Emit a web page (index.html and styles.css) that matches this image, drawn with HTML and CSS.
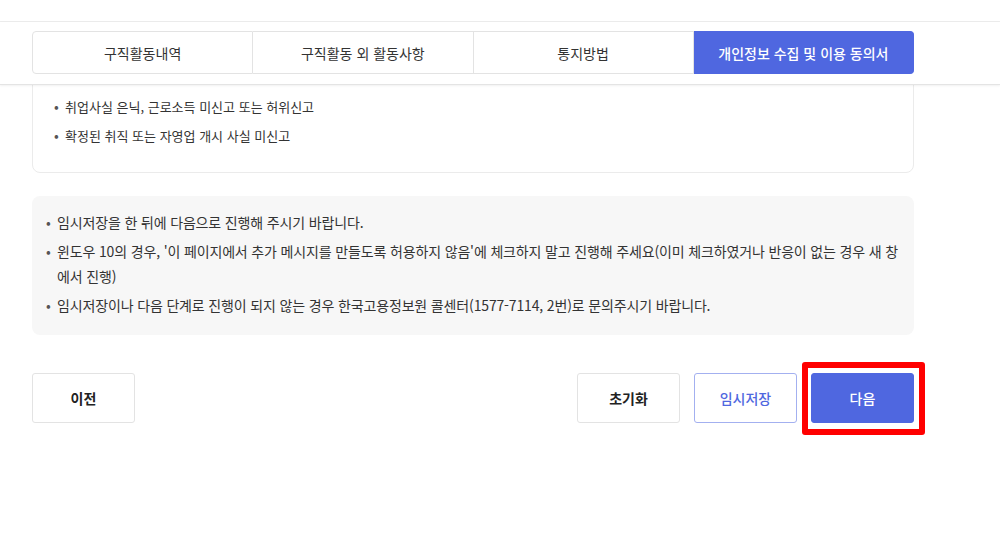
FILE: index.html
```html
<!DOCTYPE html>
<html lang="ko">
<head>
    <meta charset="utf-8">
    <link rel="stylesheet" href="styles.css">
</head>
<body>
    <div class="topbar"></div>
    <nav class="tabbar">
        <ul class="tabs">
            <li class="tab">구직활동내역</li>
            <li class="tab">구직활동 외 활동사항</li>
            <li class="tab">통지방법</li>
            <li class="tab active">개인정보 수집 및 이용 동의서</li>
        </ul>
    </nav>

    <main class="content">
        <div class="card">
            <ul class="dot-list">
                <li>실업인정 허위 신청</li>
                <li>취업사실 은닉, 근로소득 미신고 또는 허위신고</li>
                <li>확정된 취직 또는 자영업 개시 사실 미신고</li>
            </ul>
        </div>

        <div class="notice">
            <ul class="dot-list">
                <li>임시저장을 한 뒤에 다음으로 진행해 주시기 바랍니다.</li>
                <li>윈도우 10의 경우, '이 페이지에서 추가 메시지를 만들도록 허용하지 않음'에 체크하지 말고 진행해 주세요(이미 체크하였거나 반응이 없는 경우 새 창 에서 진행)</li>
                <li>임시저장이나 다음 단계로 진행이 되지 않는 경우 한국고용정보원 콜센터(1577-7114, 2번)로 문의주시기 바랍니다.</li>
            </ul>
        </div>

        <div class="actions">
            <button class="btn">이전</button>
            <div class="actions-right">
                <button class="btn">초기화</button>
                <button class="btn btn-line">임시저장</button>
                <div class="next-wrap">
                    <button class="btn btn-primary">다음</button>
                    <span class="highlight"></span>
                </div>
            </div>
        </div>
    </main>
</body>
</html>
```

FILE: styles.css
```css
html, body {
    min-height: 100%;
}
body {
    margin: 0;
    padding-bottom: 110px;
    background: #fff;
    font-family: "Noto Sans CJK KR", "Noto Sans", sans-serif;
    color: #333;
    font-size: 13px;
}
ul {
    margin: 0;
    padding: 0;
    list-style: none;
}

.topbar {
    height: 21px;
    border-bottom: 1px solid #ececec;
}
.tabbar {
    position: relative;
    z-index: 2;
    background: #fff;
    padding: 9px 0 10px 32px;
    border-bottom: 1px solid #e4e4e4;
    box-shadow: 0 1px 2px rgba(0, 0, 0, 0.06);
}
.tabs {
    display: flex;
    width: 882px;
    height: 43px;
}
.tab {
    flex: 1;
    display: flex;
    align-items: center;
    justify-content: center;
    font-size: 14px;
    color: #333;
    border: 1px solid #e3e3e3;
    border-left: none;
}
.tab:first-child {
    border-left: 1px solid #e3e3e3;
    border-radius: 4px 0 0 4px;
}
.tab.active {
    background: #4f67e0;
    border-color: #4f67e0;
    color: #fff;
    font-weight: 500;
    border-radius: 0 4px 4px 0;
}

.content {
    width: 882px;
    padding-left: 32px;
}
.card {
    position: relative;
    z-index: 1;
    margin-top: -45px;
    padding: 24px 23px 24px 22px;
    border: 1px solid #ebebeb;
    border-radius: 8px;
}
.dot-list li {
    position: relative;
    padding-left: 10px;
    line-height: 25px;
}
.dot-list li + li {
    margin-top: 4px;
}
.dot-list li::before {
    content: "•";
    position: absolute;
    left: -1px;
    color: #555;
    font-size: 14px;
}

.notice {
    margin-top: 23px;
    padding: 14px 15px 17px;
    background: #f7f7f7;
    border-radius: 8px;
    font-size: 14px;
    letter-spacing: -0.15px;
}

.actions {
    display: flex;
    justify-content: space-between;
    margin-top: 38px;
}
.actions-right {
    display: flex;
    gap: 14px;
}
.btn {
    display: block;
    width: 103px;
    height: 50px;
    background: #fff;
    border: 1px solid #e3e3e3;
    border-radius: 3px;
    font-family: inherit;
    font-size: 14px;
    font-weight: bold;
    color: #222;
}
.btn-line {
    border-color: #a3b0f0;
    color: #4f67e0;
    font-weight: 500;
}
.btn-primary {
    background: #4f67e0;
    border-color: #4f67e0;
    color: #fff;
    font-weight: 500;
}
.next-wrap {
    position: relative;
}
.highlight {
    position: absolute;
    top: -11px;
    left: -9px;
    right: -11px;
    bottom: -12px;
    border: 6px solid #f00;
    border-radius: 3px;
}
```
